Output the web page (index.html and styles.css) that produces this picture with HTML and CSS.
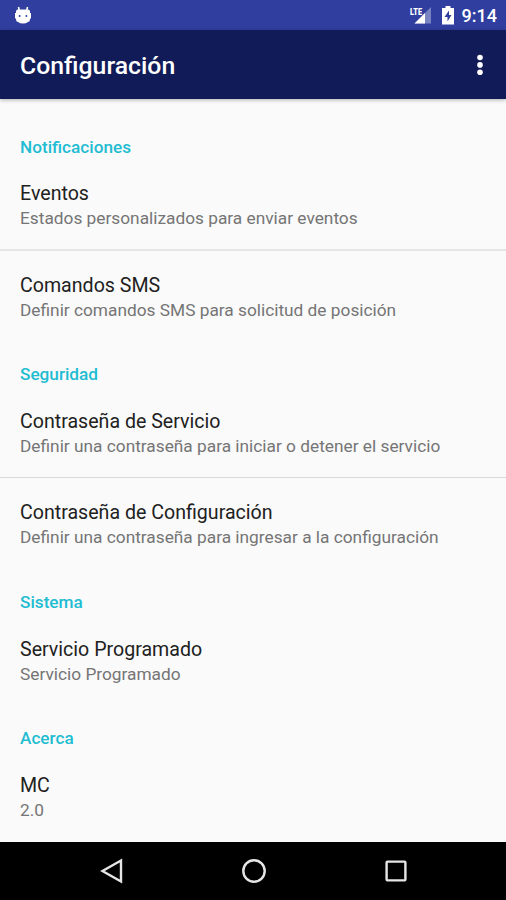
FILE: index.html
```html
<!DOCTYPE html>
<html lang="es">
<head>
  <meta charset="UTF-8" />
  <meta name="viewport" content="width=device-width, initial-scale=1.0" />
  <title>Configuración</title>
  <link rel="stylesheet" href="styles.css">
</head>
<body>
  <div class="status-bar">
    <svg class="status-robot" width="18" height="20" viewBox="0 0 18 20">
      <path d="M4.500 2L5.200 5M13.500 2L12.800 5" stroke="#fff" stroke-width="1.6" />
      <path d="M4 4.500h10q2 0 2 2V8h1v5.500h-1v1q0 2-2 2.500-2 1.500-5 1.500T4 17q-2-.5-2-2.500v-1H1V8h1V6.500q0-2 2-2z" fill="#fff" />
      <circle cx="5.600" cy="11" r="1" fill="#303f9f" />
      <circle cx="12.400" cy="11" r="1" fill="#303f9f" />
    </svg>
    <div class="status-icons">
      <svg width="24" height="20" viewBox="0 0 24 20">
        <path d="M22 2v16.500H5.500z" fill="#7983c1" />
        <path d="M16 8v10.500H5.500z" fill="#fff" />
        <text class="lte" x="1" y="9.500" textLength="12" lengthAdjust="spacingAndGlyphs">LTE</text>
      </svg>
      <svg class="battery" width="12" height="19" viewBox="0 0 12 19">
        <path d="M3.500 0h5v2H12v16.500H0V2h3.500z" fill="#fff" />
        <path d="M7 4.500L2.500 11h3v4.500L9.500 9H7z" fill="#303f9f" />
      </svg>
      <span class="clock">9:14</span>
    </div>
  </div>

  <header class="app-bar">
    <h1 class="app-title">Configuración</h1>
    <svg class="menu" width="8" height="22" viewBox="0 0 8 22">
      <circle cx="4" cy="3.500" r="2.800" />
      <circle cx="4" cy="10.900" r="2.800" />
      <circle cx="4" cy="18.300" r="2.800" />
    </svg>
  </header>

  <main class="settings">
    <h2 class="category">Notificaciones</h2>
    <div class="item">
      <div class="title">Eventos</div>
      <div class="summary">Estados personalizados para enviar eventos</div>
    </div>
    <div class="item divided light">
      <div class="title">Comandos SMS</div>
      <div class="summary">Definir comandos SMS para solicitud de posición</div>
    </div>

    <h2 class="category">Seguridad</h2>
    <div class="item">
      <div class="title">Contraseña de Servicio</div>
      <div class="summary">Definir una contraseña para iniciar o detener el servicio</div>
    </div>
    <div class="item divided">
      <div class="title">Contraseña de Configuración</div>
      <div class="summary">Definir una contraseña para ingresar a la configuración</div>
    </div>

    <h2 class="category">Sistema</h2>
    <div class="item">
      <div class="title">Servicio Programado</div>
      <div class="summary">Servicio Programado</div>
    </div>

    <h2 class="category">Acerca</h2>
    <div class="item">
      <div class="title">MC</div>
      <div class="summary">2.0</div>
    </div>
  </main>

  <nav class="nav-bar">
    <svg width="26" height="26" viewBox="0 0 26 26">
      <path d="M22 2.500v21L3.500 13z" />
    </svg>
    <svg width="26" height="26" viewBox="0 0 26 26">
      <circle cx="13" cy="13" r="10.700" />
    </svg>
    <svg width="26" height="26" viewBox="0 0 26 26">
      <rect x="3.600" y="3.600" width="18.800" height="18.800" rx="0.800" />
    </svg>
  </nav>
</body>
</html>
```
FILE: styles.css
```css
* {
  box-sizing: border-box;
  margin: 0;
  padding: 0;
}

body {
  height: 900px;
  display: flex;
  flex-direction: column;
  overflow: hidden;
  background: #fafafa;
  font-family: Roboto, sans-serif;
}

.status-bar {
  height: 30px;
  flex-shrink: 0;
  display: flex;
  align-items: center;
  justify-content: space-between;
  padding: 0 9px 0 14px;
  background: #303f9f;
  color: #fff;
}

.status-icons {
  display: flex;
  align-items: center;
}

.lte {
  font-size: 9.5px;
  font-weight: 900;
  fill: #fff;
}

.battery {
  margin: 0 8px 0 9px;
}

.clock {
  font-size: 18px;
  font-weight: 500;
  line-height: 30px;
  padding-top: 2px;
}

.app-bar {
  height: 69px;
  flex-shrink: 0;
  display: flex;
  align-items: center;
  justify-content: space-between;
  padding: 0 22px 0 20px;
  background: #111b58;
  color: #fff;
  box-shadow: 0 1px 4px rgba(0, 0, 0, 0.3);
}

.app-title {
  font-size: 24.8px;
  font-weight: 500;
  padding-top: 2px;
}

.menu {
  fill: #fff;
}

.settings {
  flex: 1;
  padding-top: 14px;
}

.category {
  height: 45.3px;
  padding-top: 22.6px;
  font-size: 17.2px;
  font-weight: 500;
  line-height: 22px;
  padding-left: 20px;
  color: #1fbcd2;
}

.item {
  height: 91.2px;
  padding: 23px 20px 0;
}

.divided {
  border-top: 1px solid #d8d8d8;
  padding-top: 22px;
}

.light {
  border-top: 2px solid #e6e6e6;
  padding-top: 21.5px;
}

.title {
  font-size: 19.6px;
  line-height: 25px;
  color: #212121;
}

.summary {
  font-size: 17.3px;
  line-height: 25px;
  color: #757575;
}

.nav-bar {
  height: 58px;
  flex-shrink: 0;
  display: flex;
  align-items: center;
  justify-content: center;
  gap: 116px;
  padding-left: 1px;
  background: #000;
}

.nav-bar svg {
  fill: none;
  stroke: #e6e6e6;
  stroke-width: 2.4;
}
```
